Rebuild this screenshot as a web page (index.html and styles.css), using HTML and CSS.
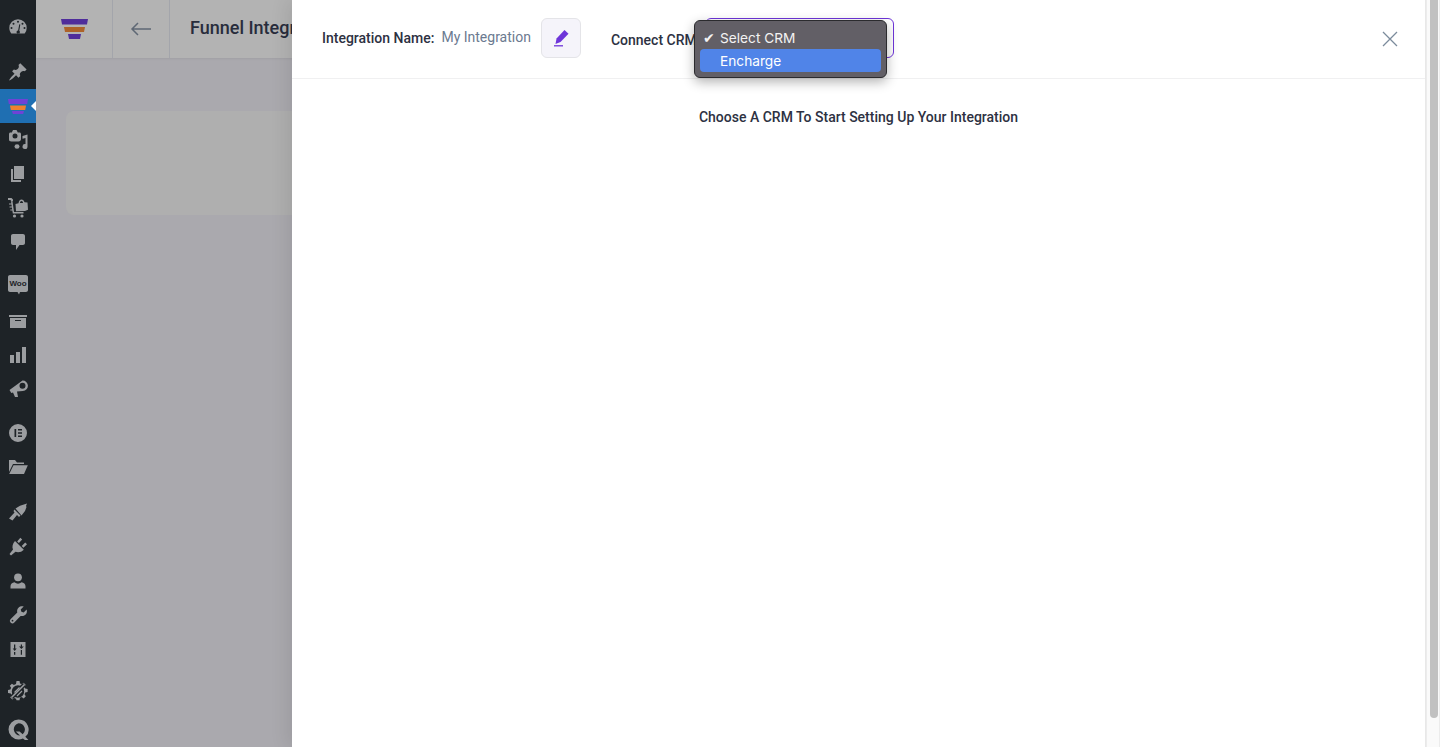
FILE: index.html
```html
<!DOCTYPE html>
<html lang="en">
<head>
<meta charset="utf-8">
<title>Funnel Integrations</title>
<link rel="stylesheet" href="styles.css">
</head>
<body>
<div class="app">
  <nav class="sidebar">
    <a class="item first"><svg viewBox="0 0 20 20"><path fill-rule="evenodd" d="M3.300 16.500h13.400a8.800 8.800 0 0 0 2-5.500A8.700 8.700 0 0 0 10 2.300 8.700 8.700 0 0 0 1.300 11c0 2.100.8 4 2 5.500zM10 3.800a1 1 0 1 1 0 2 1 1 0 0 1 0-2zM5.500 5.700a1 1 0 1 1 0 2 1 1 0 0 1 0-2zM14.500 5.700a1 1 0 1 1 0 2 1 1 0 0 1 0-2zM3.500 10a1 1 0 1 1 0 2 1 1 0 0 1 0-2zM16.500 10a1 1 0 1 1 0 2 1 1 0 0 1 0-2zM11.300 7.200l1 .3-1 6.300a1.700 1.700 0 1 1-2.700.8 1.700 1.700 0 0 1 1.500-1.100z"/></svg></a>
    <a class="item gap-s"><svg viewBox="0 0 20 20"><path d="M10.440 3.020l1.820-1.820 6.360 6.350-1.830 1.820c-1.050-.68-2.480-.57-3.410.36l-.75.75c-.92.93-1.040 2.350-.35 3.410l-1.830 1.820-2.410-2.410-2.800 2.790c-.42.42-3.380 2.710-3.800 2.290s1.860-3.390 2.280-3.810l2.790-2.790L4.100 9.360l1.830-1.820c1.050.69 2.480.57 3.400-.36l.75-.75c.93-.92 1.050-2.350.36-3.410z"/></svg></a>
    <a class="item active">
      <svg viewBox="0 0 20 15" class="funnel"><path class="fp" d="M0 0h20l-.8 5H.8z"/><path class="fo" d="M2 6.500h16l-.8 4.500H2.800z"/><path class="fp" d="M4 12h12l-.8 3H4.800z"/></svg>
    </a>
    <a class="item"><svg viewBox="0 0 20 20"><path fill-rule="evenodd" d="M5 0h3.500l1.300 2.500h1.700c.9 0 1.500.6 1.500 1.500v5c0 1.500-1 2.500-2.500 2.500h-7C1.700 11.500 1 10.800 1 9.500V4c0-.9.600-1.500 1.500-1.500h1.300zM7 3.500a2.500 2.500 0 1 0 0 5 2.500 2.500 0 0 0 0-5z"/><path d="M19.500 4.500v12a2.500 2.500 0 1 1-2-2.400V8l-3 .7V6z"/><ellipse cx="9" cy="16.500" rx="2.500" ry="2.300"/></svg></a>
    <a class="item"><svg viewBox="0 0 20 20"><path d="M6 15V2h10v13H6zm-1 1h8v2H3V5h2v11z"/></svg></a>
    <a class="item"><svg viewBox="0 0 20 20"><path d="M0 0h3.500l1.500 1.500v1.700H2.800V2H0z"/><path d="M3 3.200h1.500L6 14h9.500v1.500H4.800zM1 5.500h2.500v1H1zM1.500 8.500h2.500v1H1.500zM2.300 11.500H5v1H2.300z"/><path fill-rule="evenodd" d="M7.500 6l3-.8C10.800 3 12 1.500 13.500 1.500S16 2.700 16.500 4.300l3 .2.500 7.200-3 1.300-9 .3zM13.500 3c-.8 0-1.400.7-1.600 2h3.200c-.2-1.300-.8-2-1.600-2z"/><circle cx="6.500" cy="18" r="1.600"/><circle cx="14" cy="18" r="1.600"/></svg></a>
    <a class="item"><svg viewBox="0 0 20 20"><path d="M5 2h10c1.100 0 2 .9 2 2v7c0 1.100-.9 2-2 2h-3.500L8 18v-5H5c-1.100 0-2-.9-2-2V4c0-1.100.9-2 2-2z"/></svg></a>
    <a class="item gap-woo"><svg viewBox="0 0 20 20"><path d="M2 0h16c1.100 0 2 .9 2 2v13c0 1.100-.9 2-2 2h-6l-1 2.500-1.500-2.500H2c-1.100 0-2-.9-2-2V2C0 .9.900 0 2 0z"/><text class="woo" x="10" y="11.300" text-anchor="middle">Woo</text></svg></a>
    <a class="item gap-box"><svg viewBox="0 0 20 20"><path d="M19 4v2H1V4h18zM2 7h16v10H2V7zm11 3V9H7v1h6z"/></svg></a>
    <a class="item"><svg viewBox="0 0 20 20"><path d="M18 18V2h-4v16h4zm-6 0V7H8v11h4zm-6 0v-8H2v8h4z"/></svg></a>
    <a class="item"><svg viewBox="0 0 20 20"><path fill-rule="evenodd" d="M14.500 1.500a5.200 5.200 0 1 1 .4 10.400L9 12.600l1 5.400H7l-2-4.600-1.700.7L1.500 11zM14.500 3.700a3 3 0 1 0 0 6 3 3 0 0 0 0-6z"/></svg></a>
    <a class="item gap-l"><svg viewBox="0 0 20 20"><path fill-rule="evenodd" d="M10 1a9 9 0 1 0 0 18 9 9 0 0 0 0-18zM6.500 6h1.700v8H6.500zM10 6h4v1.500h-4zM10 9.200h4v1.600h-4zM10 12.500h4V14h-4z"/></svg></a>
    <a class="item"><svg viewBox="0 0 20 20"><path d="M1 3h6l2 2.500h7V7H5L1 15z"/><path d="M5.500 8.300H19.800L16 17H1.200z"/></svg></a>
    <a class="item gap-m2"><svg viewBox="0 0 20 20"><path d="M7.500 6.500L12 3.800 19 1.500 18 4l.5 1-1.500 4-3.500 4.500z"/><path d="M6.500 7.500l6 6L11 15 9 13 4.500 18.500 1 16.500 6.500 10.500 5.500 9z"/></svg></a>
    <a class="item tight"><svg viewBox="0 0 20 20"><path d="M7 4L15.800 12.800C13.500 15.300 10 15.800 7.500 14.800L3 18.500 1.500 17 5 12.500C3.800 10 4.600 6.400 7 4z"/><path d="M9.200 4.400L12.300.8l1.900 1.700-3.300 3.600zM13.700 9l3.500-3.500 1.800 1.800-3.600 3.500z"/></svg></a>
    <a class="item"><svg viewBox="0 0 20 20"><circle cx="10" cy="6.300" r="3.900"/><path d="M2.500 17.500v-2.300c0-2.100 1.700-3.400 4-3.900 1 .9 2.200 1.400 3.500 1.400s2.500-.5 3.500-1.400c2.300.5 4 1.800 4 3.900v2.300z"/></svg></a>
    <a class="item"><svg viewBox="0 0 20 20"><path fill-rule="evenodd" d="M18.600 4.400c.7 2 .2 4-1.200 5.300-1.300 1.300-3.100 1.700-4.800 1.200L6.300 17.600a2.500 2.500 0 0 1-3.800-3.300l6.800-6.800C8.800 5.800 9.200 4 10.500 2.700 11.800 1.300 13.800.9 15.700 1.400l-3 3 .7 2.400 2.300.6zM4.500 14.800a.9.900 0 1 0 0 1.800.9.900 0 0 0 0-1.800z"/></svg></a>
    <a class="item"><svg viewBox="0 0 20 20"><path fill-rule="evenodd" d="M2.500 3h15v15h-15zM6 5.500v4H4.700L6.700 12l2-2.500H7.300v-4zM6 13v2.800h1.300V13zM12.800 5.500v2H11l2.400 2.500L15.800 7.500H14v-2zM12.800 11v4.800H14V11z"/></svg></a>
    <a class="item gap-m"><svg viewBox="0 0 20 20"><path fill-rule="evenodd" d="M8.500 0h3l.5 2.400 1.700.7 2-1.300 2.100 2.100-1.300 2 .7 1.700 2.400.5v3l-2.400.5-.7 1.700 1.300 2-2.100 2.100-2-1.300-1.700.7-.5 2.400h-3L8 17.800l-1.700-.7-2 1.300-2.100-2.100 1.300-2-.7-1.700L0 12V9l2.400-.5.7-1.700-1.300-2 2.100-2.100 2 1.300L8 3zM10 4.300a6.200 6.200 0 1 0 0 12.400 6.200 6.200 0 0 0 0-12.400z"/><path class="slash-gap" d="M3.500 16.500L16.500 3.500"/><path class="slash" d="M3.500 16.500L16.500 3.500"/><path class="slash-thin" d="M6.500 11.500l5-5M9 15l5-5"/></svg></a>
    <a class="item gap-xs2"><svg viewBox="0 0 20 20" class="q"><path d="M10 .5a9.500 9.500 0 0 0 0 19c1.500 0 3-.4 4.200-1l2.300 1.800h3.300L16.500 17A9.500 9.500 0 0 0 10 .5zM10 4a6 6 0 0 1 4 10.500L11 12H7.500l4 3.800A6 6 0 0 1 10 4z"/></svg></a>
  </nav>

  <main class="page">
    <header class="topbar">
      <div class="logo-cell">
        <svg viewBox="0 0 27 20" class="logo"><path class="dp" d="M0 0h27l-1 5.500H1z"/><path class="do" d="M3 8h21l-1 5H4z"/><path class="dp" d="M7 15h13l-1 5H8z"/></svg>
      </div>
      <div class="back-cell">
        <svg viewBox="0 0 22 14" class="back"><path d="M21 7H2M8 1L2 7l6 6"/></svg>
      </div>
      <h1 class="title">Funnel Integrations</h1>
    </header>
    <section class="content"><div class="card"></div></section>
  </main>
</div>

<aside class="drawer">
  <div class="drawer-head">
    <span class="label">Integration Name:</span>
    <span class="name">My Integration</span>
    <button class="edit" type="button" aria-label="Edit name">
      <svg viewBox="0 0 16 18"><path d="M11.500 1l4 3.800L7.500 13l-5 2 1-5.500z"/><path class="under" d="M1 16.800h9"/></svg>
    </button>
    <span class="label crm">Connect CRM</span>
    <div class="select"></div>
    <button class="close" type="button" aria-label="Close">
      <svg viewBox="0 0 16 16"><path d="M1 1l14 14M15 1L1 15"/></svg>
    </button>
  </div>
  <p class="hint">Choose A CRM To Start Setting Up Your Integration</p>
  <div class="menu">
    <div class="opt"><span class="check">✔</span>Select CRM</div>
    <div class="opt on">Encharge</div>
  </div>
</aside>
<div class="scroll"><div class="thumb"></div></div>
</body>
</html>
```
FILE: styles.css
```css
* { box-sizing: border-box; }
html, body { margin: 0; height: 100%; overflow: hidden; }
body { font-family: Roboto, "Liberation Sans", sans-serif; background: #aaa9ae; }

.app { display: flex; height: 747px; }

.sidebar {
  width: 36px;
  flex: none;
  background: #1e2327;
  display: flex;
  flex-direction: column;
  padding-top: 10px;
}
.item {
  height: 34px;
  flex: none;
  display: flex;
  align-items: center;
  justify-content: center;
  position: relative;
}
.item svg { width: 20px; height: 20px; fill: #9b9da0; display: block; }
.gap-s { margin-top: 11px; }
.gap-m { margin-top: 8px; }
.gap-woo { margin-top: 9px; }
.gap-box { margin-top: 2px; }
.gap-l { margin-top: 10px; }
.gap-m2 { margin-top: 11px; }
.tight { margin-top: 1px; }
.gap-xs2 { margin-top: 4px; }
.woo { font: 700 8px "Liberation Sans", sans-serif; fill: #1e2327; }
.slash-gap { stroke: #1e2327; stroke-width: 4.500; fill: none; }
.slash { stroke: #9b9da0; stroke-width: 1.600; fill: none; }
.slash-thin { stroke: #9b9da0; stroke-width: 1.200; fill: none; }

.active { background: #1f6fb2; }
.active::after {
  content: "";
  position: absolute;
  right: 0;
  top: 12px;
  border: 5px solid transparent;
  border-right-color: #fff;
  border-left-width: 0;
}
.item .funnel { height: 15px; }
.item .q { width: 21px; height: 21px; }
.fp { fill: #6f42d6; }
.fo { fill: #f0812d; }

.page { flex: 1; display: flex; flex-direction: column; min-width: 0; }
.topbar {
  height: 58px;
  background: #b3b3b3;
  display: flex;
  align-items: stretch;
  box-shadow: 0 1px 2px rgba(0, 0, 0, .06);
}
.logo-cell, .back-cell {
  display: flex;
  align-items: center;
  justify-content: center;
  border-right: 1px solid #a3a5ab;
}
.logo-cell { width: 77px; }
.back-cell { width: 57px; }
.logo { width: 27px; height: 20px; margin-top: -1px; }
.dp { fill: #4f2d9b; }
.do { fill: #ad6328; }
.back { width: 22px; height: 14px; fill: none; stroke: #5f6875; stroke-width: 1.500; }
.title {
  margin: 0 0 0 20px;
  align-self: center;
  font-size: 18px;
  font-weight: 500;
  color: #282c3c;
  white-space: nowrap;
  position: relative;
  top: -2px;
}
.content { padding: 53px 0 0 30px; }
.card { height: 104px; background: #afafaf; border-radius: 8px; }

.drawer {
  position: absolute;
  left: 292px;
  top: 0;
  width: 1134px;
  height: 747px;
  background: #fff;
  border-right: 1px solid #e8e8e8;
  box-shadow: -6px 0 16px rgba(0, 0, 0, .08);
}
.drawer-head {
  height: 79px;
  border-bottom: 1px solid #f0f0f1;
  display: flex;
  align-items: center;
  padding: 0 27px 2px 30px;
}
.label { font-size: 14px; font-weight: 500; color: #2d3142; white-space: nowrap; }
.name { font-size: 14px; color: #6b7a90; margin-left: 7px; white-space: nowrap; position: relative; top: -1px; }
.edit {
  width: 40px;
  height: 40px;
  margin-left: 10px;
  padding: 0;
  background: #f5f4fa;
  border: 1px solid #e4e4e8;
  border-radius: 6px;
  display: flex;
  align-items: center;
  justify-content: center;
}
.edit svg { width: 16px; height: 18px; fill: #6e35d9; }
.under { stroke: #6e35d9; stroke-width: 1.300; fill: none; }
.crm { margin-left: 30px; position: relative; top: 2px; }
.select {
  width: 189px;
  height: 40px;
  margin-left: 8px;
  border: 1px solid #6e35d9;
  border-radius: 6px;
}
.close { margin-left: auto; width: 16px; height: 16px; padding: 0; background: none; border: 0; position: relative; top: 1px; }
.close svg { display: block; width: 16px; height: 16px; fill: none; stroke: #7b8b9c; stroke-width: 1.300; }
.hint {
  margin: 30px 0 0;
  text-align: center;
  font-size: 14px;
  font-weight: 500;
  line-height: 16px;
  color: #2d3142;
}

.menu {
  position: absolute;
  left: 402px;
  top: 20px;
  width: 193px;
  height: 58px;
  padding: 5px 5px;
  background: #625f66;
  border: 1px solid #2b2b2e;
  border-radius: 6px;
  box-shadow: 0 4px 12px rgba(0, 0, 0, .3);
  font-family: Inter, Roboto, sans-serif;
  font-size: 13.700px;
  color: #f2f2f2;
}
.opt { height: 23px; line-height: 25px; padding-left: 20px; position: relative; border-radius: 4px; }
.on { background: #5084e8; color: #fff; }
.check { position: absolute; left: 3px; font-size: 14px; font-family: "DejaVu Sans", sans-serif; }

.scroll {
  position: absolute;
  left: 1426px;
  top: 0;
  width: 14px;
  height: 747px;
  background: #fafafa;
  border-left: 1px solid #ececec;
  border-right: 1px solid #ececec;
  padding-left: 3px;
}
.thumb { width: 8px; height: 718px; background: #c1c1c1; border-radius: 0 0 4px 4px; }
```
